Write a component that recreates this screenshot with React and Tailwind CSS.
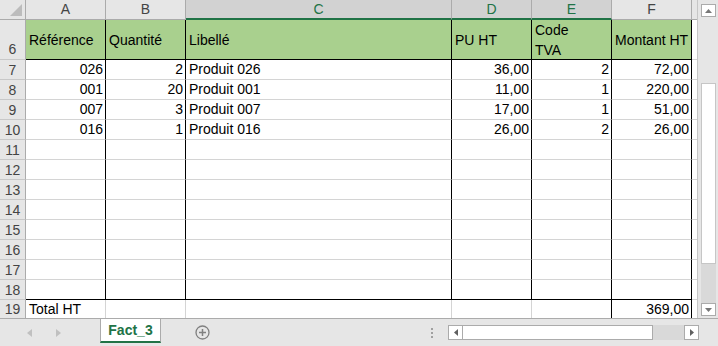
import React from "react";

const rows = [
  { n: 7, a: "026", b: "2", c: "Produit 026", d: "36,00", e: "2", f: "72,00" },
  { n: 8, a: "001", b: "20", c: "Produit 001", d: "11,00", e: "1", f: "220,00" },
  { n: 9, a: "007", b: "3", c: "Produit 007", d: "17,00", e: "1", f: "51,00" },
  { n: 10, a: "016", b: "1", c: "Produit 016", d: "26,00", e: "2", f: "26,00" },
  { n: 11 }, { n: 12 }, { n: 13 }, { n: 14 }, { n: 15 }, { n: 16 }, { n: 17 }, { n: 18 },
  { n: 19, a: "Total HT", f: "369,00" },
];

const keys = ["a", "b", "c", "d", "e", "f"];

const cellBorder = (n, i) => {
  let right = false;
  let bottom = false;
  if (n >= 6 && n <= 18) right = true;
  if (n === 19 && i >= 4) right = true;
  if (n === 6 || n === 18) bottom = true;
  return `border-r ${n === 19 ? "" : "border-b"} ${right ? "border-r-black" : "border-r-[#d4d4d4]"} ${
    bottom ? "border-b-black" : "border-b-[#d4d4d4]"
  }`;
};

const ColHead = ({ label, selected }) => (
  <div
    className={
      selected
        ? "flex items-center justify-center bg-[#d2d2d2] border-r border-r-[#ababab] border-b-2 border-b-[#217346] text-[#217346]"
        : "flex items-center justify-center bg-[#e6e6e6] border-r border-r-[#ababab] border-b border-b-[#ababab] text-[#444]"
    }
  >
    {label}
  </div>
);

const RowHead = ({ n, bottom }) => (
  <div
    className={`flex justify-center leading-[20px] bg-[#e6e6e6] text-[#444] border-r border-r-[#ababab] ${
      bottom ? "items-end" : "items-center"
    } ${n === 19 ? "" : "border-b border-b-[#c8c8c8]"}`}
  >
    {n}
  </div>
);

const Sheet = () => (
  <div className="grid grid-cols-[26px_80px_80px_266px_80px_80px_80px_5px] grid-rows-[20px_40px_repeat(12,20px)_18px] w-[697px] h-[318px] overflow-hidden">
    {/* column headers */}
    <div className="bg-[#e6e6e6] border-r border-r-[#ababab] border-b border-b-[#ababab] flex items-end justify-end pr-[3px] pb-[3px]">
      <svg width="12" height="12" viewBox="0 0 12 12">
        <polygon points="12,0 12,12 0,12" fill="#bcbcbc" />
      </svg>
    </div>
    <ColHead label="A" />
    <ColHead label="B" />
    <ColHead label="C" selected />
    <ColHead label="D" selected />
    <ColHead label="E" selected />
    <ColHead label="F" />
    <div className="bg-[#e6e6e6] border-b border-b-[#ababab]" />

    {/* header row 6 */}
    <RowHead n={6} bottom />
    <div className={`bg-[#a9d08e] flex items-center pl-[3px] pt-[1px] ${cellBorder(6, 0)}`}>Référence</div>
    <div className={`bg-[#a9d08e] flex items-center pl-[3px] pt-[1px] ${cellBorder(6, 1)}`}>Quantité</div>
    <div className={`bg-[#a9d08e] flex items-center pl-[3px] pt-[1px] ${cellBorder(6, 2)}`}>Libellé</div>
    <div className={`bg-[#a9d08e] flex items-center pl-[3px] pt-[1px] ${cellBorder(6, 3)}`}>PU HT</div>
    <div className={`bg-[#a9d08e] flex flex-col justify-center pl-[3px] leading-[20px] ${cellBorder(6, 4)}`}>
      <span>Code</span>
      <span>TVA</span>
    </div>
    <div className={`bg-[#a9d08e] flex items-center pl-[3px] pt-[1px] ${cellBorder(6, 5)}`}>Montant HT</div>
    <div className="border-b border-b-[#d4d4d4]" />

    {rows.map((r) => (
      <React.Fragment key={r.n}>
        <RowHead n={r.n} />
        {keys.map((k, i) => (
          <div
            key={k}
            className={`flex items-center whitespace-nowrap ${
              k === "c" || (r.n === 19 && k === "a") ? "justify-start pl-[3px]" : "justify-end pr-[2px]"
            } ${cellBorder(r.n, i)}`}
          >
            {r[k]}
          </div>
        ))}
        <div className={r.n === 19 ? "" : "border-b border-b-[#d4d4d4]"} />
      </React.Fragment>
    ))}
  </div>
);

const VScroll = () => (
  <div className="w-[21px] h-[318px] bg-[#e6e6e6] border-l border-l-[#c6c6c6] flex flex-col items-center">
    <div className="mt-[4px] w-[15px] h-[13px] bg-white border border-[#ababab] flex items-center justify-center">
      <svg width="7" height="4" viewBox="0 0 7 4">
        <polygon points="0,4 7,4 3.5,0" fill="#777" />
      </svg>
    </div>
    <div className="w-[15px] flex-1 flex flex-col">
      <div className="h-[66px]" />
      <div className="h-[181px] bg-white border border-[#c6c6c6]" />
      <div className="flex-1 bg-[#d9d9d9]" />
    </div>
    <div className="mb-[2px] w-[15px] h-[13px] bg-white border border-[#ababab] flex items-center justify-center">
      <svg width="7" height="4" viewBox="0 0 7 4">
        <polygon points="0,0 7,0 3.5,4" fill="#777" />
      </svg>
    </div>
  </div>
);

const TabBar = () => (
  <div className="h-[28px] bg-[#e6e6e6] border-t border-t-[#ababab] flex items-start">
    <div className="w-[100px] h-[27px] flex items-center">
      <svg className="ml-[27px]" width="5" height="8" viewBox="0 0 5 8">
        <polygon points="5,0 5,8 0,4" fill="#c0c0c0" />
      </svg>
      <svg className="ml-[24px]" width="5" height="8" viewBox="0 0 5 8">
        <polygon points="0,0 0,8 5,4" fill="#c0c0c0" />
      </svg>
    </div>
    <div className="w-[61px] h-[24px] bg-white border-x border-x-[#ababab] border-b-2 border-b-[#217346] flex items-center justify-center font-bold text-[#217346] text-[14px]">
      Fact_3
    </div>
    <div className="ml-[34px] h-[27px] flex items-center">
      <svg width="15" height="15" viewBox="0 0 15 15">
        <circle cx="7.5" cy="7.5" r="6.5" fill="none" stroke="#808080" strokeWidth="1.3" />
        <path d="M7.5 4v7M4 7.5h7" stroke="#808080" strokeWidth="1.5" />
      </svg>
    </div>
    <div className="flex-1" />
    <div className="h-[27px] flex flex-col justify-center gap-[2px]">
      <div className="w-[2px] h-[2px] bg-[#a0a0a0]" />
      <div className="w-[2px] h-[2px] bg-[#a0a0a0]" />
      <div className="w-[2px] h-[2px] bg-[#a0a0a0]" />
    </div>
    <div className="ml-[15px] mr-[19px] mt-[6px] w-[251px] h-[15px] flex">
      <div className="w-[15px] bg-white border border-[#ababab] flex items-center justify-center">
        <svg width="4" height="7" viewBox="0 0 4 7">
          <polygon points="4,0 4,7 0,3.5" fill="#606060" />
        </svg>
      </div>
      <div className="w-[190px] bg-white border border-l-0 border-[#ababab]" />
      <div className="flex-1 bg-[#d9d9d9]" />
      <div className="w-[15px] bg-white border border-[#ababab] flex items-center justify-center">
        <svg width="4" height="7" viewBox="0 0 4 7">
          <polygon points="0,0 0,7 4,3.5" fill="#606060" />
        </svg>
      </div>
    </div>
  </div>
);

export default function App() {
  return (
    <div className="w-[718px] h-[346px] overflow-hidden bg-white font-['Liberation_Sans',Arial,sans-serif] text-[14px] text-black">
      <div className="flex">
        <Sheet />
        <VScroll />
      </div>
      <TabBar />
    </div>
  );
}
